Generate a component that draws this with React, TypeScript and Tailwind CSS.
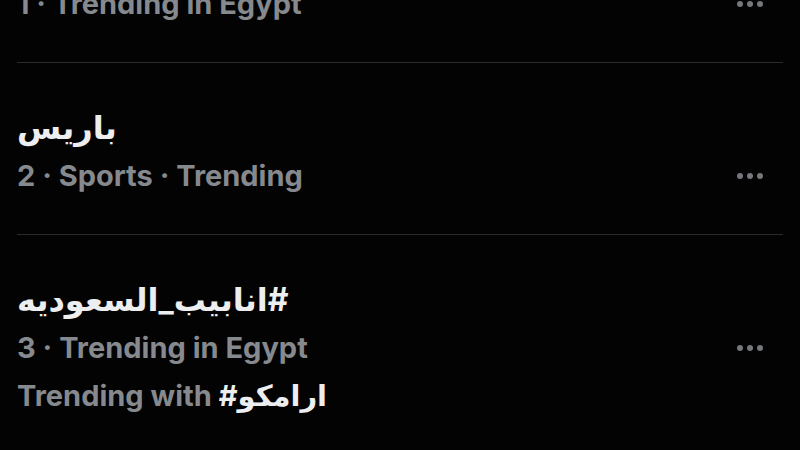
import React from "react";

type Trend = {
  title: string;
  meta: string;
  with?: string;
};

const trends: Trend[] = [
  { title: "مصر", meta: "1 · Trending in Egypt" },
  { title: "باريس", meta: "2 · Sports · Trending" },
  { title: "#انابيب_السعوديه", meta: "3 · Trending in Egypt", with: "#ارامكو" },
];

function MoreDots() {
  return (
    <div className="flex items-center gap-[4px] mr-[20px]">
      <span className="w-[6px] h-[6px] rounded-full bg-[#74777b]" />
      <span className="w-[6px] h-[6px] rounded-full bg-[#74777b]" />
      <span className="w-[6px] h-[6px] rounded-full bg-[#74777b]" />
    </div>
  );
}

function TrendItem({ trend }: { trend: Trend }) {
  return (
    <div className="border-t border-[#2a2c2f] ml-[17px] mr-[17px] pt-[41px] pb-[34px]">
      <div
        dir="auto"
        className="text-left text-[32px] leading-[48px] font-bold text-[#eceeef]"
        style={{ unicodeBidi: "plaintext" }}
      >
        {trend.title}
      </div>
      <div className="flex items-center justify-between">
        <div className="text-[29px] leading-[48px] font-bold text-[#86898d]">
          {trend.meta}
        </div>
        <MoreDots />
      </div>
      {trend.with && (
        <div className="text-[29px] leading-[48px] font-bold text-[#86898d]">
          Trending with <span className="text-[#eceeef]">{trend.with}</span>
        </div>
      )}
    </div>
  );
}

export default function App() {
  return (
    <div
      className="w-[800px] h-[450px] bg-[#030303] overflow-hidden"
      style={{ fontFamily: "Inter, 'DejaVu Sans', sans-serif" }}
    >
      <div className="-mt-[110px]">
        {trends.map((t) => (
          <TrendItem key={t.meta} trend={t} />
        ))}
      </div>
    </div>
  );
}
